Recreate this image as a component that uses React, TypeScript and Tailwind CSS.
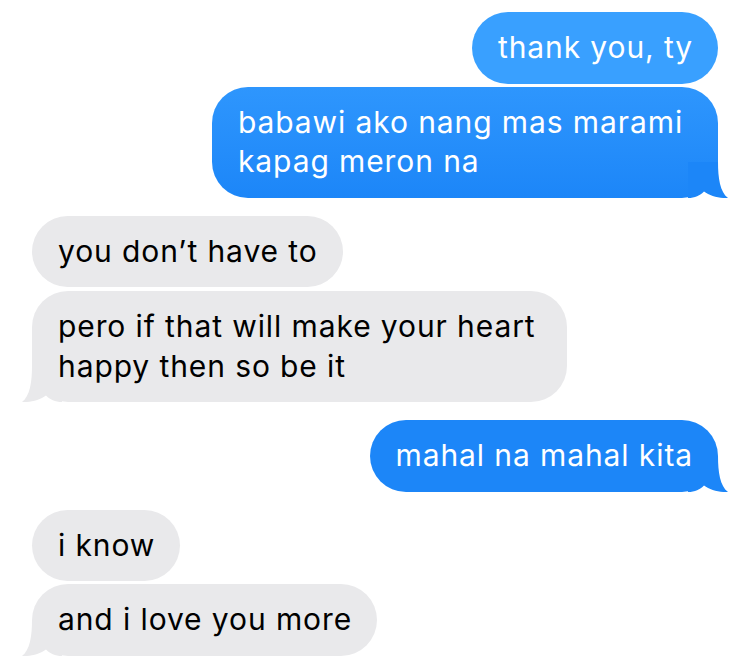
import React from 'react'

type Side = 'me' | 'them'

interface BubbleProps {
    side: Side;
    tail?: boolean;
    className?: string;
    children: React.ReactNode;
}

// iOS style tail, drawn for the right side; flipped for the left
const Tail: React.FC<{ side: Side; color: string }> = ({ side, color }) => (
    <svg
        width="40"
        height="36"
        viewBox="0 0 40 36"
        className={side === 'me' ? 'absolute bottom-0 right-[-10px]' : 'absolute bottom-0 left-[-10px] -scale-x-100'}
    >
        <path
            d="M0 0 H30 C30 16 32 30 40 36 C32 36.6 22 34 16 29.5 C12 33.5 7 36 0 36 Z"
            fill={color}
        />
    </svg>
)

const Bubble: React.FC<BubbleProps> = ({ side, tail, className, children }) => {
    const isMe = side === 'me'
    const color = isMe ? '#1c86f8' : '#e9e9eb'
    return (
        <div className={`flex ${isMe ? 'justify-end' : 'justify-start'}`}>
            <div
                className={`relative rounded-[36px] pl-[26px] pr-[25px] py-4 text-[30px] leading-[39.5px] tracking-[0.9px] ${
                    isMe ? 'text-white' : 'text-black'
                } ${className ?? ''}`}
            >
                {tail && <Tail side={side} color={color} />}
                <span className="relative">{children}</span>
            </div>
        </div>
    )
}

export default function App() {
    return (
        <div className="w-[750px] h-[668px] bg-white px-8 pt-3 overflow-hidden" style={{ fontFamily: 'Inter, "Noto Sans", sans-serif' }}>
            <div className="flex flex-col">
                <Bubble side="me" className="bg-[#39a0ff]">thank you, ty</Bubble>
                <Bubble side="me" tail className="mt-[3px] w-[506px] bg-gradient-to-b from-[#2e96fd] to-[#1c86f8]">
                    babawi ako nang mas marami<br />kapag meron na
                </Bubble>

                <Bubble side="them" className="mt-[18px] bg-[#e9e9eb]">you don’t have to</Bubble>
                <Bubble side="them" tail className="mt-1 w-[535px] bg-[#e9e9eb]">
                    pero if that will make your heart<br />happy then so be it
                </Bubble>

                <Bubble side="me" tail className="mt-[18px] bg-[#1c86f8]">mahal na mahal kita</Bubble>

                <Bubble side="them" className="mt-[18px] bg-[#e9e9eb]">i know</Bubble>
                <Bubble side="them" tail className="mt-[3px] bg-[#e9e9eb]">and i love you more</Bubble>
            </div>
        </div>
    )
}
